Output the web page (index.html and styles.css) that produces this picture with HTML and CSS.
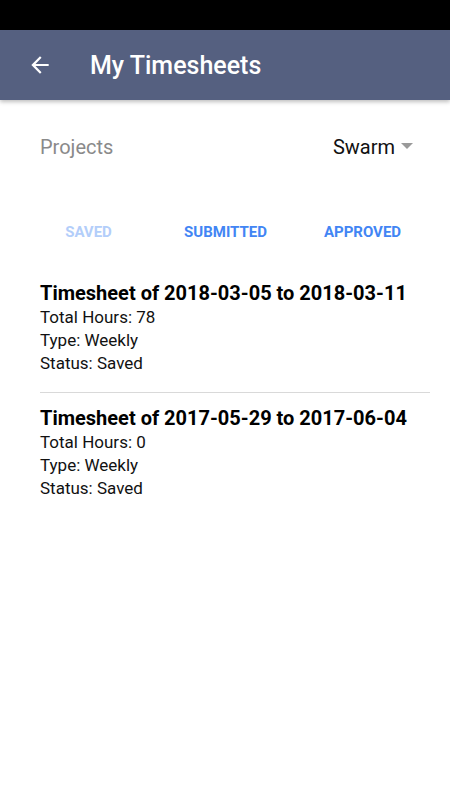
FILE: index.html
```html
<!DOCTYPE html>
<html>
    <head lang="en">
        <meta charset="UTF-8">
        <title>My Timesheets</title>
        <link rel="stylesheet" href="styles.css">
    </head>
    <body>
        <div id="status"></div>
        <div id="toolbar">
            <span class="back">
                <svg width="26" height="26" viewBox="0 0 24 24"><path fill="#fff" d="M20 11H7.83l5.59-5.59L12 4l-8 8 8 8 1.41-1.41L7.83 13H20v-2z"/></svg>
            </span>
            <h1>My Timesheets</h1>
        </div>
        <div id="picker">
            <span class="label">Projects</span>
            <span class="select">Swarm<i class="caret"></i></span>
        </div>
        <div id="tabs">
            <span class="off">Saved</span>
            <span>Submitted</span>
            <span>Approved</span>
        </div>
        <ul id="list">
            <li>
                <h2>Timesheet of 2018-03-05 to 2018-03-11</h2>
                <p>Total Hours: 78</p>
                <p>Type: Weekly</p>
                <p>Status: Saved</p>
            </li>
            <li>
                <h2>Timesheet of 2017-05-29 to 2017-06-04</h2>
                <p>Total Hours: 0</p>
                <p>Type: Weekly</p>
                <p>Status: Saved</p>
            </li>
        </ul>
    </body>
</html>
```

FILE: styles.css
```css
*{
    margin:0;
    padding:0;
}
ul,ol{
    list-style:none;
}
body{
    font-family:Roboto, "Liberation Sans", sans-serif;
    background-color:#fff;
    color:#000;
}
#status{
    height:30px;
    background-color:#000;
}
#toolbar{
    height:70px;
    background-color:#556080;
    display:flex;
    align-items:center;
    padding-left:27px;
    box-shadow:0 2px 4px rgba(0,0,0,0.25);
}
#toolbar .back{
    width:26px;
    height:26px;
    display:block;
    margin-right:37px;
}
#toolbar .back svg{
    display:block;
}
#toolbar h1{
    color:#fff;
    font-size:25px;
    font-weight:500;
}
#picker{
    display:flex;
    justify-content:space-between;
    align-items:center;
    padding:33px 37px 0 40px;
    height:28px;
}
#picker .label{
    color:#8a8a8a;
    font-size:20px;
}
#picker .select{
    color:#111;
    font-size:20px;
    display:flex;
    align-items:center;
}
#picker .caret{
    width:0;
    height:0;
    border-left:6px solid transparent;
    border-right:6px solid transparent;
    border-top:6px solid #9a9a9a;
    margin-left:6px;
    margin-top:-2px;
}
#tabs{
    display:grid;
    grid-template-columns:repeat(3, 1fr);
    margin:57px 19px 0 20px;
    height:28px;
    align-items:center;
}
#tabs span{
    text-align:center;
    text-transform:uppercase;
    color:#4285f4;
    font-size:15px;
    font-weight:700;
}
#tabs .off{
    color:#b3cefa;
}
#list{
    margin:34px 20px 0 40px;
}
#list li{
    padding-bottom:17px;
    margin-bottom:12px;
    border-bottom:1px solid #d9d9d9;
}
#list li:last-child{
    border-bottom:none;
}
#list h2{
    font-size:20px;
    font-weight:700;
    line-height:26px;
}
#list p{
    font-size:17px;
    line-height:23px;
    color:#111;
}
```
